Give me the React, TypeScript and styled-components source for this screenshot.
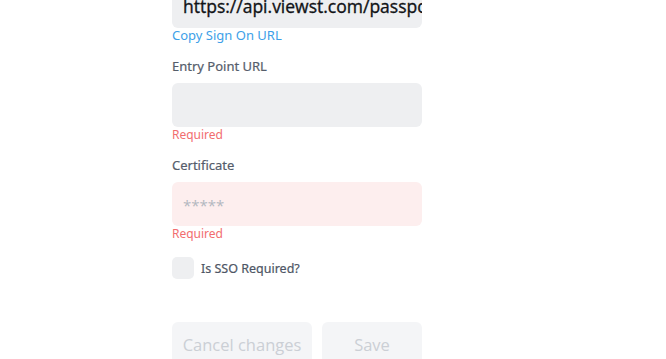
import { createGlobalStyle, styled } from "styled-components";

const GlobalStyle = createGlobalStyle`
    html, body {
        margin: 0;
        padding: 0;
        background: #ffffff;
        overflow: hidden;
    }
    * {
        box-sizing: border-box;
    }
`;

const Page = styled.div`
    width: 666px;
    height: 359px;
    overflow: hidden;
    font-family: "Open Sans", "Noto Sans", sans-serif;
`;

const Form = styled.form`
    width: 250px;
    margin: -16px 0 0 172px;
    display: flex;
    flex-direction: column;
    gap: 14px;
`;

const Field = styled.div`
    display: flex;
    flex-direction: column;
`;

const Label = styled.label`
    font-family: "Noto Sans", sans-serif;
    font-size: 13px;
    font-weight: 400;
    line-height: 18px;
    color: #555d6b;
    margin-bottom: 8px;
    -webkit-text-stroke: 0.2px #555d6b;
`;

const Input = styled.input<{ $error?: boolean }>`
    width: 100%;
    height: 44px;
    border: none;
    outline: none;
    border-radius: 6px;
    padding: 0 0 0 11px;
    font-family: "Open Sans", sans-serif;
    font-size: 17.5px;
    font-weight: 400;
    color: #111316;
    -webkit-text-stroke: 0.35px #111316;
    background: ${(p) => (p.$error ? "#fdeeee" : "#eeeff1")};

    &::placeholder {
        color: #b3b8c0;
        font-size: 15px;
        -webkit-text-stroke: 0;
    }
`;

const Helper = styled.span<{ $tone: "link" | "error" }>`
    font-family: "Noto Sans", sans-serif;
    font-size: ${(p) => (p.$tone === "link" ? "13px" : "12px")};
    line-height: 15px;
    color: ${(p) => (p.$tone === "link" ? "#3d9fe8" : "#f26d6f")};
`;

const CheckRow = styled.label`
    display: flex;
    align-items: center;
    gap: 7px;
    margin-top: 2px;
    font-family: "Noto Sans", sans-serif;
    font-size: 12.5px;
    font-weight: 400;
    color: #4e5665;
    -webkit-text-stroke: 0.2px #4e5665;
`;

const Box = styled.span`
    width: 22px;
    height: 22px;
    border-radius: 5px;
    background: #eeeff1;
`;

const Actions = styled.div`
    display: flex;
    gap: 10px;
    margin-top: 29px;
`;

const Button = styled.button<{ $w: number }>`
    width: ${(p) => p.$w}px;
    height: 44px;
    border: none;
    border-radius: 6px;
    background: #f4f5f7;
    color: #cbcfd5;
    font-family: "Open Sans", sans-serif;
    font-size: 16.5px;
    padding: 0;
`;

function App() {
    return (
        <Page>
            <GlobalStyle />
            <Form onSubmit={(e) => e.preventDefault()}>
                <Field>
                    <Input readOnly defaultValue="https://api.viewst.com/passport/saml/callback" />
                    <Helper $tone="link">Copy Sign On URL</Helper>
                </Field>
                <Field>
                    <Label>Entry Point URL</Label>
                    <Input />
                    <Helper $tone="error">Required</Helper>
                </Field>
                <Field>
                    <Label>Certificate</Label>
                    <Input $error placeholder="*****" />
                    <Helper $tone="error">Required</Helper>
                </Field>
                <CheckRow>
                    <Box />
                    Is SSO Required?
                </CheckRow>
                <Actions>
                    <Button type="button" $w={140} disabled>
                        Cancel changes
                    </Button>
                    <Button type="submit" $w={100} disabled>
                        Save
                    </Button>
                </Actions>
            </Form>
        </Page>
    );
}

export default App;
